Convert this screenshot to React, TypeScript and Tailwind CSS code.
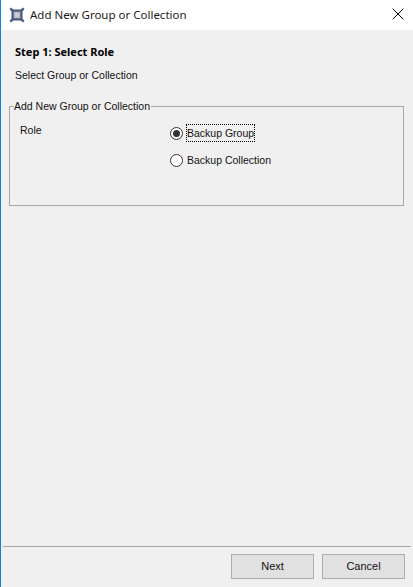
import { X } from 'lucide-react';

function AppIcon() {
    return (
        <svg width="16" height="16" viewBox="0 0 16 16" className="mt-[-1px]">
            <path d="M0.500 2 2 0.500 4.500 2.500h7L14 0.500 15.500 2 13.500 4.500v7l2 2.500-1.500 1.500-2.500-2h-7L2 15.500 0.500 14l2-2.500v-7z" fill="#46557a" />
            <path d="M2 1h1v1.500H1.500V2zM13 1h1l.5 1-.5.800h-1.200zM1.500 13.500H3V15H2l-.800-.700zM13 13.300h1.300l.4.900-.7.800h-1z" fill="#5f77ac" />
            <rect x="4.500" y="4.500" width="7" height="7" fill="#9aa0b0" />
            <rect x="5.500" y="5.500" width="5" height="5" fill="#ccced6" />
        </svg>
    );
}

function Radio({ checked }: { checked?: boolean }) {
    return (
        <span className="w-[13px] h-[13px] rounded-full border border-[#333333] bg-white flex items-center justify-center shrink-0">
            {checked && <span className="w-[7px] h-[7px] rounded-full bg-[#333333]" />}
        </span>
    );
}

export default function App() {
    return (
        <div className="w-[413px] h-[587px] flex flex-col bg-[#f0f0f0] border-l-[1px] border-[#0c84e4] text-[10.5px] text-[#111111] font-['Liberation_Sans',sans-serif] overflow-hidden">
            {/* Title bar */}
            <div className="h-[30px] bg-white flex items-center pl-[8px] pr-[5px] shrink-0">
                <AppIcon />
                <span className="ml-[5px] text-[11.5px] text-[#1a1a1a] font-['Noto_Sans',sans-serif] mt-[-1px]">Add New Group or Collection</span>
                <X className="ml-auto text-black mt-[-3px]" size={20} strokeWidth={1.2} />
            </div>

            <div className="flex-1 flex flex-col pl-[14px] pt-[15px]">
                <div className="font-bold text-[11px] leading-[14px] text-black font-['Noto_Sans',sans-serif]">Step 1: Select Role</div>
                <div className="mt-[8px] leading-[16px]">Select Group or Collection</div>

                {/* Group box */}
                <fieldset className="mt-[15px] ml-[-6px] w-[395px] h-[108px] border border-[#a8a8a8] pl-[10px] pr-[10px] m-0">
                    <legend className="ml-[-6px] pl-0 pr-[1px] leading-[16px]">Add New Group or Collection</legend>
                    <div className="flex pt-[8px]">
                        <div className="w-[150px] leading-[16px]">Role</div>
                        <div className="flex flex-col gap-[9px] mt-[2px]">
                            <label className="flex items-center gap-[3px]">
                                <Radio checked />
                                <span className="border border-dotted border-black leading-[16px] h-[18px] w-[69px] whitespace-nowrap">Backup Group</span>
                            </label>
                            <label className="flex items-center gap-[3px]">
                                <Radio />
                                <span className="border border-transparent leading-[16px] h-[18px] whitespace-nowrap">Backup Collection</span>
                            </label>
                        </div>
                    </div>
                </fieldset>
            </div>

            {/* Footer */}
            <div className="shrink-0 ml-[2px] mr-[2px] border-t border-[#a6a6a6] h-[41px] flex justify-end gap-[8px] pt-[7px] pr-[6px]">
                <button className="w-[83px] h-[25px] bg-[#e1e1e1] border border-[#adadad] leading-none text-[11px]">Next</button>
                <button className="w-[83px] h-[25px] bg-[#e1e1e1] border border-[#adadad] leading-none text-[11px]">Cancel</button>
            </div>
        </div>
    );
}
